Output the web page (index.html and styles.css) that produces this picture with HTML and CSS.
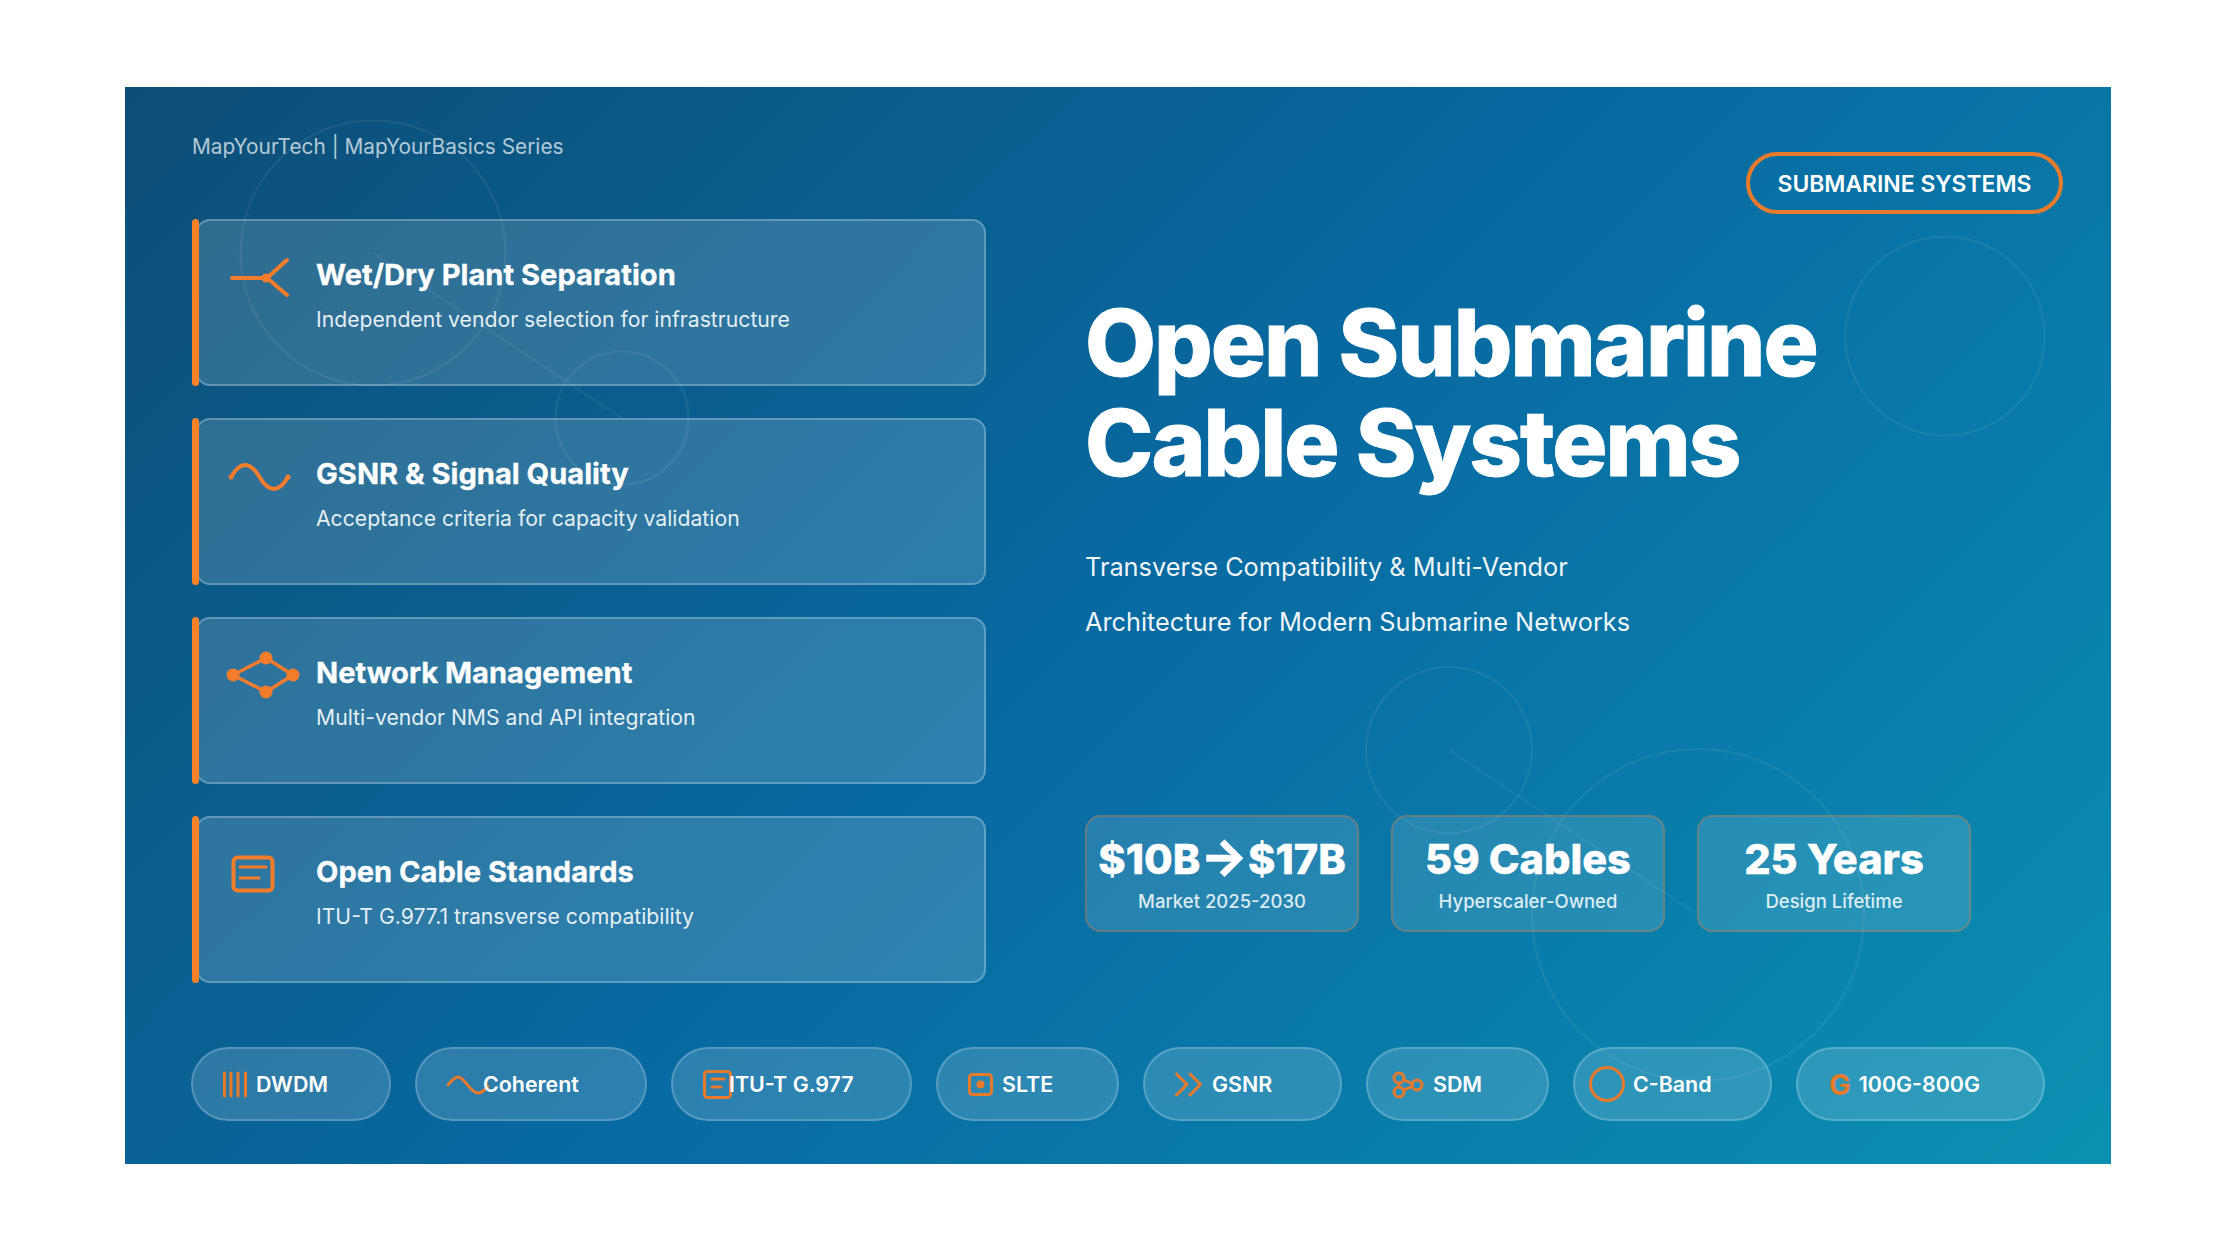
FILE: index.html
```html
<!DOCTYPE html>
<html lang="en">
<head>
<meta charset="utf-8">
<title>Open Submarine Cable Systems</title>
<link rel="stylesheet" href="styles.css">
</head>
<body>
<section class="slide">
  <svg class="decor" width="1986" height="1077" viewBox="0 0 1986 1077" aria-hidden="true">
    <circle cx="248" cy="166" r="132.5"/>
    <circle cx="497" cy="331" r="66.5"/>
    <circle cx="1820" cy="249" r="99.5"/>
    <circle cx="1324" cy="663" r="83"/>
    <circle cx="1573" cy="828" r="166"/>
    <line x1="248" y1="166" x2="497" y2="331"/>
    <line x1="1324" y1="663" x2="1573" y2="828"/>
  </svg>
  <div class="badge">SUBMARINE SYSTEMS</div>
  <div class="main">
    <div class="left">
      <div class="brand">MapYourTech | MapYourBasics Series</div>
      <div class="cards">
        <article class="card">
          <svg class="card-icon" width="76" height="60" viewBox="0 0 76 60"><path d="M8 33H43M63 15L43 33L63 50"/><circle class="solid" cx="42" cy="33" r="4.5"/></svg>
          <div><h2>Wet/Dry Plant Separation</h2><p>Independent vendor selection for infrastructure</p></div>
        </article>
        <article class="card">
          <svg class="card-icon" width="76" height="60" viewBox="0 0 76 60"><path d="M7 33Q21 9 35.500 33T64 33"/><circle class="solid" cx="7" cy="33" r="2.500"/><circle class="solid" cx="64" cy="33" r="2.500"/></svg>
          <div><h2>GSNR &amp; Signal Quality</h2><p>Acceptance criteria for capacity validation</p></div>
        </article>
        <article class="card">
          <svg class="card-icon thin" width="76" height="60" viewBox="0 0 76 60"><path d="M9 32L42 15L69 32L42 49Z" class="diamond"/><circle class="solid" cx="9" cy="32" r="6.500"/><circle class="solid" cx="42" cy="15" r="6.500"/><circle class="solid" cx="69" cy="32" r="6.500"/><circle class="solid" cx="42" cy="49" r="6.500"/></svg>
          <div><h2>Network Management</h2><p>Multi-vendor NMS and API integration</p></div>
        </article>
        <article class="card">
          <svg class="card-icon" width="76" height="60" viewBox="0 0 76 60"><rect x="9.500" y="15.500" width="39" height="33" rx="4"/><path class="rule" d="M16 25H42M16 36H35"/></svg>
          <div><h2>Open Cable Standards</h2><p>ITU-T G.977.1 transverse compatibility</p></div>
        </article>
      </div>
    </div>
    <div class="right">
      <h1>Open Submarine<br>Cable Systems</h1>
      <p class="subtitle">Transverse Compatibility &amp; Multi-Vendor<br>Architecture for Modern Submarine Networks</p>
      <div class="stats">
        <div class="stat"><strong>$10B<i class="arrow">→</i>$17B</strong><span>Market 2025-2030</span></div>
        <div class="stat"><strong>59 Cables</strong><span>Hyperscaler-Owned</span></div>
        <div class="stat"><strong>25 Years</strong><span>Design Lifetime</span></div>
      </div>
    </div>
  </div>
  <div class="pills">
    <div class="pill p-dwdm"><svg width="26" height="40" viewBox="0 0 26 40"><path d="M1.500 9V32M8 9V32M15 9V32M22.500 9V32"/></svg><span>DWDM</span></div>
    <div class="pill p-coherent"><svg width="42" height="40" viewBox="0 0 42 40"><path d="M1 21C5 16 8 13 11 13C18 13 23 29 31 29C35 29 38 26 41 22"/></svg><span>Coherent</span></div>
    <div class="pill p-itu"><svg width="29" height="40" viewBox="0 0 29 40"><rect x="1.500" y="7.500" width="26" height="26" rx="3"/><path d="M9 15H21M9 23H18"/></svg><span>ITU-T G.977</span></div>
    <div class="pill p-slte"><svg width="25" height="40" viewBox="0 0 25 40"><rect x="1.500" y="10.500" width="22" height="20" rx="3"/><circle class="solid" cx="12.500" cy="20.500" r="4"/></svg><span>SLTE</span></div>
    <div class="pill p-gsnr"><svg width="27" height="40" viewBox="0 0 27 40"><path d="M1.500 10L12 20.500L1.500 31M15 10L25.500 20.500L15 31"/></svg><span>GSNR</span></div>
    <div class="pill p-sdm"><svg width="32" height="40" viewBox="0 0 32 40"><path d="M12 16L20 19.500M12 26L20 22.500M7 19V23"/><circle class="ring" cx="7" cy="14" r="5"/><circle class="ring" cx="7" cy="28" r="5"/><circle class="ring" cx="25" cy="21" r="5"/></svg><span>SDM</span></div>
    <div class="pill p-cband"><svg width="36" height="40" viewBox="0 0 36 40"><circle cx="18" cy="20" r="16.500"/></svg><span>C-Band</span></div>
    <div class="pill p-rate"><b class="glyph">G</b><span>100G-800G</span></div>
  </div>
</section>
</body>
</html>
```
FILE: styles.css
```css
* { box-sizing: border-box; }
html, body { margin: 0; background: #fff; }
body { font-family: "Inter", "Liberation Sans", sans-serif; color: #fff; }

.slide {
  position: relative;
  width: 1986px;
  height: 1077px;
  margin: 87px 0 0 125px;
  padding: 45px 66px 0 67px;
  overflow: hidden;
  background: linear-gradient(135deg, #0c4e76 0%, #086aa2 50%, #0b90b2 100%);
}
.decor { position: absolute; inset: 0; }
.decor circle, .decor line { fill: none; stroke: rgba(255,255,255,.07); stroke-width: 2; }
.decor line { stroke: rgba(255,255,255,.06); }

.badge {
  position: absolute;
  top: 65px;
  right: 48px;
  width: 317px;
  height: 62px;
  display: flex;
  align-items: center;
  justify-content: center;
  padding-top: 1px;
  border: 4px solid #e87a2c;
  border-radius: 31px;
  font-size: 22.900px;
  font-weight: 600;
}

.main { position: relative; display: flex; }
.left { width: 794px; flex: none; }
.brand { font-size: 20.850px; line-height: 30px; color: rgba(255,255,255,.7); margin-bottom: 57px; }
.cards { display: flex; flex-direction: column; gap: 32px; }
.card {
  position: relative;
  height: 167px;
  padding: 24px 32px 0;
  display: flex;
  gap: 16px;
  background: rgba(255,255,255,.15);
  border: 2px solid rgba(255,255,255,.25);
  border-radius: 14px;
  margin-left: 4px;
}
.card::before {
  content: "";
  position: absolute;
  left: -6px;
  top: -2px;
  bottom: -2px;
  width: 7px;
  border-radius: 4px;
  background: #fb8229;
}
.card > div { padding-top: 12px; }
.card h2 { margin: 0; font-size: 29.100px; line-height: 36px; font-weight: 700; -webkit-text-stroke: .3px #fff; }
.card p { margin: 11px 0 0; font-size: 21.200px; line-height: 30px; color: rgba(255,255,255,.9); }

.card-icon { flex: none; margin-left: -6px; }
svg path, svg rect, svg circle { fill: none; stroke: #f47c2a; stroke-width: 4; stroke-linecap: round; stroke-linejoin: round; }
.decor circle { stroke: rgba(255,255,255,.07); stroke-width: 2; }
svg circle.solid { fill: #f47c2a; stroke: none; }
.card-icon .diamond { stroke-width: 3.500; }
.card-icon .rule { stroke-width: 3; }

.right { margin-left: 99px; padding-top: 161px; flex: 1; }
h1 { margin: 0; font-size: 92px; line-height: 100px; font-weight: 800; letter-spacing: -2px; -webkit-text-stroke: .8px #fff; }
.subtitle { margin: 46px 0 0; font-size: 25.300px; line-height: 55px; color: rgba(255,255,255,.95); }
.stats { display: flex; gap: 32px; margin-top: 166px; }
.stat {
  width: 274px;
  height: 117px;
  display: flex;
  flex-direction: column;
  align-items: center;
  padding-top: 17px;
  background: rgba(255,255,255,.12);
  border: 2px solid rgba(249,115,22,.3);
  border-radius: 16px;
}
.stat strong { font-size: 41.500px; line-height: 50px; font-weight: 800; white-space: nowrap; -webkit-text-stroke: .4px #fff; }
.stat .arrow { font-size: 50px; font-style: normal; line-height: 40px; }
.stat span { margin-top: 5px; font-size: 18.500px; line-height: 24px; font-weight: 500; color: rgba(255,255,255,.85); }

.pills { position: relative; display: flex; gap: 24px; margin-top: 64px; margin-left: -1px; }
.pill {
  height: 74px;
  display: flex;
  align-items: center;
  background: rgba(255,255,255,.15);
  border: 2px solid rgba(255,255,255,.2);
  border-radius: 37px;
  font-size: 21.400px;
  font-weight: 600;
}
.pill svg { flex: none; }
.pill svg path, .pill svg rect, .pill svg circle { stroke: #e87a2c; stroke-width: 3; }
.pill svg circle.solid { fill: #e87a2c; stroke: none; }
.pill svg circle.ring { stroke-width: 3; }
.pill > span { position: relative; }
.p-dwdm { width: 200px; padding-left: 30px; gap: 7px; }
.p-coherent { width: 232px; padding-left: 30px; gap: 0; }
.p-coherent svg { margin-right: -6px; }
.p-itu { width: 241px; padding-left: 30px; }
.p-itu svg { margin-right: -3px; }
.p-slte { width: 183px; padding-left: 30px; gap: 9px; }
.p-gsnr { width: 199px; padding-left: 30px; gap: 10px; }
.p-sdm { width: 183px; padding-left: 24px; gap: 9px; }
.p-cband { width: 199px; padding-left: 14px; gap: 8px; }
.p-rate { width: 249px; padding-left: 31px; gap: 8px; }
.glyph { font-size: 29px; font-weight: 700; color: #e87a2c; }
```
